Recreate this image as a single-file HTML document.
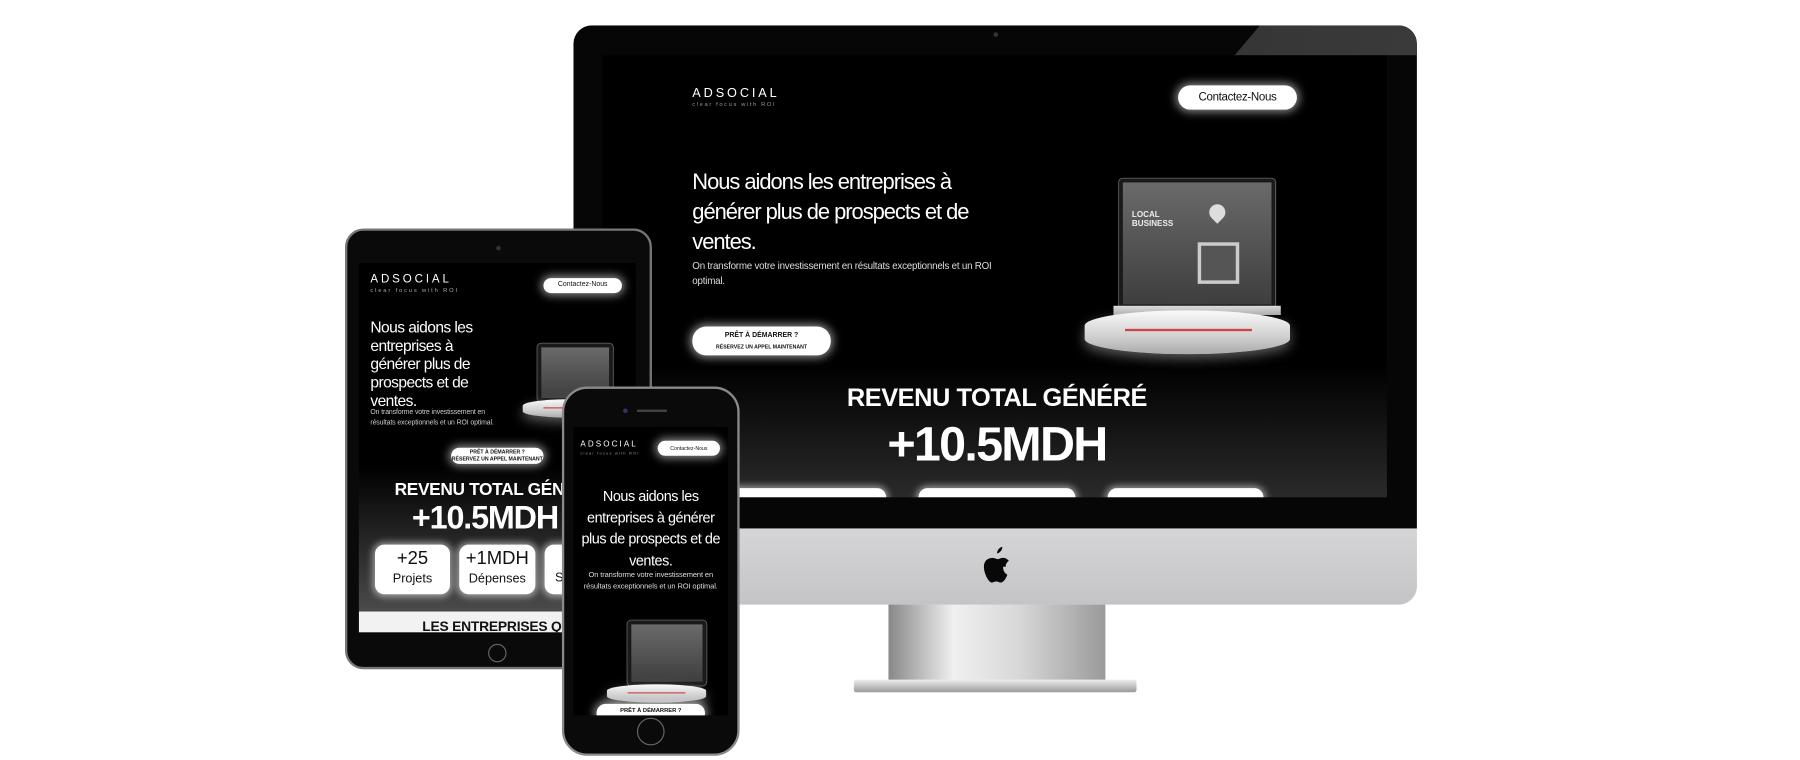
<!DOCTYPE html>
<html><head><meta charset="utf-8"><style>
*{margin:0;padding:0;box-sizing:border-box}
html,body{width:1800px;height:760px;background:#fff;overflow:hidden;font-family:"Liberation Sans",sans-serif}
#w{position:absolute;left:0;top:0;width:1560px;height:659px;transform:scale(1.153846);transform-origin:0 0}
.a{position:absolute}
.wt{color:#fff}
.btn{position:absolute;background:#fff;border-radius:12px;box-shadow:0 0 8px 2px rgba(255,255,255,.55);color:#111;text-align:center;white-space:nowrap;overflow:hidden}
.lap{position:absolute}
.lap .scr{position:absolute;background:linear-gradient(#6a6a6a,#3e3e3e);border:3px solid #1a1a1a;border-radius:3px;box-shadow:0 0 0 1px #555}
.lap .kb{position:absolute;background:linear-gradient(#ddd,#aaa);}
.lap .base{position:absolute;background:linear-gradient(#fafafa,#d0d0d0 60%,#aaa);border-radius:50%/35%;box-shadow:0 4px 10px rgba(255,255,255,.35)}
.lap .red{position:absolute;background:#c44;height:2px}
.card{position:absolute;background:#fff;border-radius:8px;box-shadow:0 0 6px 2px rgba(255,255,255,.5);text-align:center;color:#111}
</style></head><body><div id="w">

<!-- iMac -->
<div class="a" style="left:770px;top:520px;width:188px;height:72px;background:linear-gradient(90deg,#888,#f0f0f0 30%,#d8d8d8 60%,#9a9a9a)"></div>
<div class="a" style="left:740px;top:589px;width:245px;height:11px;background:linear-gradient(#eee,#999);border-radius:2px"></div>
<div class="a" style="left:497px;top:22px;width:731px;height:502px;border-radius:16px;background:#dcdcdc;overflow:hidden">
  <div class="a" style="left:0;top:0;width:731px;height:436px;background:#060606"></div>
  <div class="a" style="left:0;top:0;width:731px;height:26px;background:linear-gradient(90deg,#262626,#3a3a3a);clip-path:polygon(595px 0,731px 0,731px 26px,573px 26px)"></div>
  <div class="a" style="left:0;top:436px;width:731px;height:66px;background:linear-gradient(#d5d5d7,#c4c4c6)"></div>
  <div class="a" style="left:364px;top:6px;width:4px;height:4px;border-radius:50%;background:#333"></div>
  <svg class="a" style="left:352px;top:452px" width="28" height="32" viewBox="0 0 24 28"><path d="M17 0c0 2-1.5 4.5-4 5 0-2.5 1.7-4.6 4-5zM19.5 15c0-3 2.3-4.3 2.4-4.4-1.4-2-3.4-2.3-4.1-2.3-1.8-.2-3.4 1-4.3 1s-2.3-1-3.7-1C5.8 8.4 3 10.5 3 15c0 5 3.5 12 6 12 1.2 0 1.8-.8 3.4-.8s2 .8 3.4.8c2.6 0 4.7-5 5-6-.1 0-3.3-1.3-3.3-6z" fill="#080808"/></svg>
  <!-- screen -->
  <div class="a" style="left:25px;top:26px;width:680px;height:383px;background:linear-gradient(#000 0%,#000 70%,#2a2a2a 100%);overflow:hidden">
    <div class="a wt" style="left:78px;top:27px;font-size:11px;letter-spacing:2.5px">ADSOCIAL</div>
    <div class="a" style="left:78px;top:40px;font-size:5px;letter-spacing:1.4px;color:#999">clear focus with ROI</div>
    <div class="btn" style="left:499px;top:26px;width:103px;height:21px;font-size:10px;line-height:21px;letter-spacing:-.3px">Contactez-Nous</div>
    <div class="a wt" style="left:78px;top:98px;font-size:19px;line-height:26px;width:285px;letter-spacing:-.9px">Nous aidons les entreprises à générer plus de prospects et de ventes.</div>
    <div class="a" style="left:78px;top:176px;font-size:8.5px;line-height:13px;width:285px;color:#ddd;letter-spacing:-.2px">On transforme votre investissement en résultats exceptionnels et un ROI optimal.</div>
    <div class="btn" style="left:78px;top:235px;width:120px;height:25px;font-size:6px;font-weight:bold;line-height:9px;padding-top:4px">PRÊT À DÉMARRER ?<br><span style="font-size:4.5px">RÉSERVEZ UN APPEL MAINTENANT</span></div>
    <div class="lap" style="left:413px;top:107px;width:185px;height:145px">
      <div class="scr" style="left:35px;top:0;width:135px;height:112px"></div>
      <div class="a" style="left:46px;top:28px;font-size:7px;font-weight:bold;color:#eee;line-height:8px">LOCAL<br>BUSINESS</div>
      <div class="a" style="left:113px;top:22px;width:14px;height:14px;border-radius:50% 50% 50% 0;transform:rotate(-45deg);background:#ddd"></div>
      <div class="a" style="left:103px;top:55px;width:36px;height:36px;border:3px solid #ccc;background:#555"></div>
      <div class="kb" style="left:30px;top:110px;width:145px;height:8px"></div>
      <div class="base" style="left:5px;top:114px;width:178px;height:38px"></div>
      <div class="red" style="left:40px;top:130px;width:110px"></div>
    </div>
    <div class="a wt" style="left:0;top:284px;width:684px;text-align:center;font-size:22px;font-weight:bold;letter-spacing:-.4px">REVENU TOTAL GÉNÉRÉ</div>
    <div class="a wt" style="left:0;top:313px;width:684px;text-align:center;font-size:42px;font-weight:bold;letter-spacing:-1.5px">+10.5MDH</div>
    <div class="card" style="left:110px;top:375px;width:136px;height:30px"></div>
    <div class="card" style="left:274px;top:375px;width:136px;height:30px"></div>
    <div class="card" style="left:438px;top:375px;width:135px;height:30px"></div>
  </div>
</div>

<!-- Tablet -->
<div class="a" style="left:299px;top:198px;width:266px;height:382px;border-radius:16px;background:#0a0a0a;border:2px solid #777;overflow:hidden">
  <div class="a" style="left:129px;top:13px;width:4px;height:4px;border-radius:50%;background:#333"></div>
  <div class="a" style="left:122px;top:358px;width:16px;height:16px;border-radius:50%;border:1px solid #666"></div>
  <div class="a" style="left:10px;top:28px;width:240px;height:320px;background:linear-gradient(#000 0%,#000 55%,#555 100%);overflow:hidden">
    <div class="a wt" style="left:10px;top:9px;font-size:10px;letter-spacing:2.5px">ADSOCIAL</div>
    <div class="a" style="left:10px;top:21px;font-size:5px;letter-spacing:1.6px;color:#aaa">clear focus with ROI</div>
    <div class="btn" style="left:160px;top:13px;width:68px;height:13px;font-size:6px;line-height:13px">Contactez-Nous</div>
    <div class="a wt" style="left:10px;top:48px;font-size:13.5px;line-height:16px;width:105px;letter-spacing:-.5px">Nous aidons les entreprises à générer plus de prospects et de ventes.</div>
    <div class="a" style="left:10px;top:126px;font-size:6px;line-height:9px;width:108px;color:#ccc;letter-spacing:-.1px">On transforme votre investissement en résultats exceptionnels et un ROI optimal.</div>
    <div class="lap" style="left:140px;top:70px;width:85px;height:65px">
      <div class="scr" style="left:15px;top:0;width:65px;height:50px"></div>
      <div class="base" style="left:2px;top:48px;width:80px;height:16px"></div>
      <div class="red" style="left:20px;top:55px;width:45px;height:1px"></div>
    </div>
    <div class="btn" style="left:80px;top:160px;width:80px;height:14px;font-size:4.5px;font-weight:bold;line-height:6px;padding-top:1px">PRÊT À DÉMARRER ?<br>RÉSERVEZ UN APPEL MAINTENANT</div>
    <div class="a wt" style="left:31px;top:188px;font-size:15px;font-weight:bold;white-space:nowrap;letter-spacing:-.3px">REVENU TOTAL GÉNÉRÉ</div>
    <div class="a wt" style="left:46px;top:205px;font-size:28px;font-weight:bold;white-space:nowrap;letter-spacing:-1px">+10.5MDH</div>
    <div class="card" style="left:14px;top:244px;width:65px;height:43px;font-size:16px;line-height:16px;padding-top:5px">+25<br><span style="font-size:11px">Projets</span></div>
    <div class="card" style="left:87px;top:244px;width:66px;height:43px;font-size:16px;line-height:16px;padding-top:5px">+1MDH<br><span style="font-size:11px">Dépenses</span></div>
    <div class="card" style="left:161px;top:244px;width:66px;height:43px;font-size:11px;line-height:16px;padding-top:21px;text-align:left;padding-left:9px">S</div>
    <div class="a" style="left:0;top:302px;width:240px;height:20px;background:#f2f2f2;color:#111;font-size:12px;font-weight:bold;padding:6px 0 0 55px;white-space:nowrap;letter-spacing:-.2px">LES ENTREPRISES QUI</div>
  </div>
</div>

<!-- Phone -->
<div class="a" style="left:487px;top:335px;width:154px;height:320px;border-radius:22px;background:#0a0a0a;border:2px solid #8a8a8a;overflow:hidden">
  <div class="a" style="left:51px;top:17px;width:4px;height:4px;border-radius:50%;background:#336"></div>
  <div class="a" style="left:63px;top:18px;width:26px;height:2px;background:#444"></div>
  <div class="a" style="left:63px;top:285px;width:24px;height:24px;border-radius:50%;border:1px solid #666"></div>
  <div class="a" style="left:8px;top:33px;width:134px;height:250px;background:#000;overflow:hidden">
    <div class="a wt" style="left:6px;top:12px;font-size:7px;letter-spacing:1.8px">ADSOCIAL</div>
    <div class="a" style="left:6px;top:21px;font-size:3.5px;letter-spacing:1px;color:#999">clear focus with ROI</div>
    <div class="btn" style="left:73px;top:12px;width:54px;height:13px;font-size:4.5px;line-height:13px">Contactez-Nous</div>
    <div class="a wt" style="left:0;top:51px;width:134px;text-align:center;font-size:12.5px;line-height:18.5px;letter-spacing:-.4px">Nous aidons les entreprises à générer plus de prospects et de ventes.</div>
    <div class="a" style="left:2px;top:124px;width:130px;text-align:center;font-size:6.5px;line-height:10px;color:#ddd;letter-spacing:-.1px">On transforme votre investissement en résultats exceptionnels et un ROI optimal.</div>
    <div class="lap" style="left:27px;top:168px;width:90px;height:72px">
      <div class="scr" style="left:20px;top:0;width:68px;height:56px"></div>
      <div class="base" style="left:2px;top:55px;width:86px;height:16px"></div>
      <div class="red" style="left:20px;top:62px;width:50px;height:1px"></div>
    </div>
    <div class="btn" style="left:20px;top:240px;width:94px;height:16px;font-size:5px;font-weight:bold;padding-top:3px">PRÊT À DÉMARRER ?</div>
  </div>
</div>

</div></body></html>
